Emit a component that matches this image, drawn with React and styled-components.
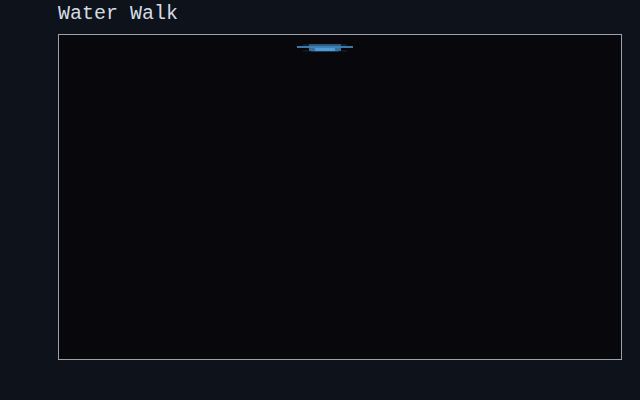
import React from "react";
import styled, { createGlobalStyle } from "styled-components";

const Global = createGlobalStyle`
  html, body {
    margin: 0;
    padding: 0;
    background: #0e121b;
  }
`;

const Page = styled.div`
  display: flex;
  flex-direction: column;
  align-items: flex-start;
  padding: 4px 0 0 58px;
  width: 640px;
  height: 400px;
  box-sizing: border-box;
`;

const Title = styled.h1`
  margin: 0 0 10px 0;
  font-family: "Liberation Mono", "DejaVu Sans Mono", monospace;
  font-weight: normal;
  font-size: 20px;
  line-height: 20px;
  color: #d4dbe4;
  letter-spacing: 0;
`;

const Stage = styled.div`
  position: relative;
  width: 562px;
  height: 324px;
  border: 1px solid #9ca2ac;
  background: #08080c;
  overflow: hidden;
`;

const Sprite = styled.svg`
  position: absolute;
  left: ${(p) => p.$x}px;
  top: ${(p) => p.$y}px;
  shape-rendering: crispEdges;
`;

// Pixel-art water strider skimming the surface
function Strider() {
  return (
    <Sprite $x={238} $y={9} width="58" height="12" viewBox="0 0 58 12">
      <rect x="6" y="0" width="6" height="2" fill="#0f1f2a" />
      <rect x="44" y="0" width="6" height="2" fill="#0f1f2a" />
      <rect x="6" y="6" width="6" height="2" fill="#0c1820" />
      <rect x="44" y="6" width="6" height="2" fill="#0c1820" />
      <rect x="0" y="2" width="56" height="2" fill="#3c78a8" />
      <rect x="12" y="0" width="32" height="2" fill="#2b587c" />
      <rect x="12" y="2" width="32" height="2" fill="#4280b4" />
      <rect x="12" y="4" width="32" height="3" fill="#3a6f9c" />
      <rect x="18" y="4" width="20" height="3" fill="#529ad6" />
      <rect x="14" y="7" width="28" height="1" fill="#1c3650" />
    </Sprite>
  );
}

export default function App() {
  return (
    <>
      <Global />
      <Page>
        <Title>Water Walk</Title>
        <Stage>
          <Strider />
        </Stage>
      </Page>
    </>
  );
}
